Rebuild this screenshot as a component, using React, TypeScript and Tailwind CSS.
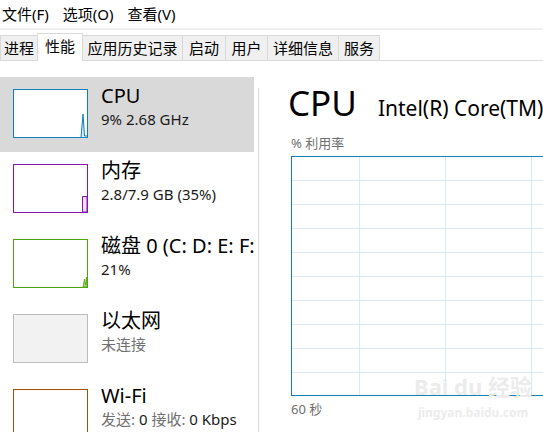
import * as React from 'react';

const font = "font-['Noto_Sans','Noto_Sans_CJK_SC',sans-serif]";

const tabs = [
  { label: '进程', w: 'w-[37px]', cls: 'border-l' },
  { label: '性能', w: 'w-[46px]', cls: 'border-l border-r', active: true },
  { label: '应用历史记录', w: 'w-[100px]', cls: 'border-r' },
  { label: '启动', w: 'w-[43px]', cls: 'border-r' },
  { label: '用户', w: 'w-[42px]', cls: 'border-r' },
  { label: '详细信息', w: 'w-[71px]', cls: 'border-r' },
  { label: '服务', w: 'w-[41px]', cls: 'border-r' },
];

const Thumb: React.FC<{ kind: string }> = ({ kind }) => {
  const box: Record<string, string> = {
    cpu: 'border-[#117dbb] bg-white',
    mem: 'border-[#8b12ae] bg-white',
    disk: 'border-[#4da60c] bg-white',
    eth: 'border-[#bcbcbc] bg-[#f2f2f2]',
    wifi: 'border-[#a74f01] bg-white',
  };
  return (
    <div className={`ml-[13px] mt-[12px] w-[75px] h-[49px] shrink-0 border ${box[kind]}`}>
      <svg width="73" height="47" viewBox="0 0 73 47">
        {kind === 'cpu' && (
          <path d="M67 47 L69 24 L70.5 46 L73 46" fill="#d9eaf4" stroke="#117dbb" strokeWidth="1" />
        )}
        {kind === 'mem' && (
          <path d="M68.5 47 L68.5 31.5 L73 31.5 L73 47 Z" fill="#f1e2f6" stroke="#8b12ae" strokeWidth="1" />
        )}
        {kind === 'disk' && (
          <path d="M69 47 L70.5 39 L71.5 45 L72.5 37 L73 47 Z" fill="#a9d67f" stroke="#4da60c" strokeWidth="0.8" />
        )}
      </svg>
    </div>
  );
};

const Item: React.FC<{ kind: string; title: string; sub: React.ReactNode; active?: boolean }> = ({
  kind,
  title,
  sub,
  active,
}) => (
  <div className={`flex h-[75px] w-[254px] shrink-0 ${active ? 'bg-[#d9d9d9]' : ''}`}>
    <Thumb kind={kind} />
    <div className="ml-[13px] pt-[5px] flex flex-col whitespace-nowrap">
      <div className="text-[20px] leading-[27px] text-black">{title}</div>
      <div className="mt-[1px] text-[15px] leading-[19px] text-[#1a1a1a]">{sub}</div>
    </div>
  </div>
);

export default function App() {
  const hLines = [24, 48, 72, 96, 120, 144, 168, 192, 216];
  const vLines = [68, 154, 240];
  return (
    <div className={`relative w-[543px] h-[432px] overflow-hidden bg-white ${font}`}>
      {/* menu */}
      <div className="flex items-center h-[28px] pl-[2px] gap-[14px] text-[15px] text-black">
        <span>文件(F)</span>
        <span>选项(O)</span>
        <span>查看(V)</span>
      </div>
      <div className="h-[2px] bg-[#f0f0f0]" />
      {/* tabs */}
      <div className="flex items-end h-[31px] border-b border-[#d9d9d9]">
        {tabs.map((t) => (
          <div
            key={t.label}
            className={`${t.w} ${t.cls} border-t border-[#d9d9d9] flex justify-center text-[15px] text-black ${
              t.active
                ? 'relative z-10 h-[28px] -mb-px bg-white items-start pt-[1px] leading-[22px]'
                : 'h-[25px] bg-[#f0f0f0] items-center leading-[22px]'
            }`}
          >
            {t.label}
          </div>
        ))}
      </div>
      {/* body */}
      <div className="flex h-[371px]">
        <div className="w-[258px] shrink-0 overflow-hidden pt-[16px] flex flex-col">
          <Item kind="cpu" title="CPU" sub="9% 2.68 GHz" active />
          <Item kind="mem" title="内存" sub="2.8/7.9 GB (35%)" />
          <Item kind="disk" title="磁盘 0 (C: D: E: F:" sub="21%" />
          <Item kind="eth" title="以太网" sub={<span className="text-[#707070]">未连接</span>} />
          <Item
            kind="wifi"
            title="Wi-Fi"
            sub={
              <span>
                <span className="text-[#707070]">发送:</span> 0 <span className="text-[#707070]">接收:</span> 0 Kbps
              </span>
            }
          />
        </div>
        <div className="w-px mt-[27px] bg-[#dadada] shrink-0" />
        <div className="flex flex-col pl-[32px] whitespace-nowrap">
          <div className="flex items-baseline mt-[22px] gap-[21px] -ml-[3px]">
            <span className="text-[35px] leading-[40px] text-black">CPU</span>
            <span className="text-[21px] leading-[28px] text-black">Intel(R) Core(TM)</span>
          </div>
          <div className="mt-[11px] text-[13px] leading-[18px] text-[#707070]">% 利用率</div>
          <div className="mt-[4px] w-[300px] h-[240px]">
            <svg width="300" height="240" viewBox="0 0 300 240">
              {hLines.map((y) => (
                <line key={y} x1="0" x2="300" y1={y + 0.5} y2={y + 0.5} stroke="#d9eaf4" strokeWidth="1" />
              ))}
              {vLines.map((x) => (
                <line key={x} x1={x + 0.5} x2={x + 0.5} y1="0" y2="240" stroke="#d9eaf4" strokeWidth="1" />
              ))}
              <rect x="0.5" y="0.5" width="310" height="239" fill="none" stroke="#117dbb" strokeWidth="1" />
            </svg>
          </div>
          <div className="mt-[4px] text-[13px] leading-[18px] text-[#707070]">60 秒</div>
        </div>
      </div>
      {/* watermark */}
      <div className="absolute left-[414px] top-[372px] flex flex-col items-center whitespace-nowrap text-[#ececec] pointer-events-none">
        <div className="text-[22px] leading-[28px] font-bold">Bai du 经验</div>
        <div className="mt-[6px] text-[12px] leading-[14px] font-bold">jingyan.baidu.com</div>
      </div>
    </div>
  );
}
